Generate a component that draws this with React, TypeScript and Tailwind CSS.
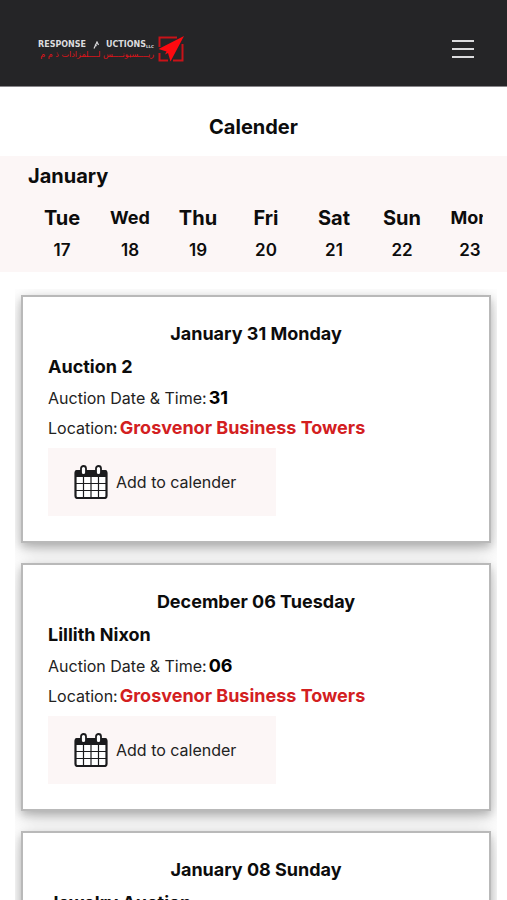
type Auction = { id: number; heading: string; title: string; day: string; location: string };

const days = [
  { name: "Tue", date: 17, wide: true },
  { name: "Wed", date: 18, wide: false },
  { name: "Thu", date: 19, wide: true },
  { name: "Fri", date: 20, wide: true },
  { name: "Sat", date: 21, wide: true },
  { name: "Sun", date: 22, wide: true },
  { name: "Mon", date: 23, wide: false },
];

const auctions: Auction[] = [
  { id: 1, heading: "January 31 Monday", title: "Auction 2", day: "31", location: "Grosvenor Business Towers" },
  { id: 2, heading: "December 06 Tuesday", title: "Lillith Nixon", day: "06", location: "Grosvenor Business Towers" },
  { id: 3, heading: "January 08 Sunday", title: "Jewelry Auction", day: "08", location: "Grosvenor Business Towers" },
];

function Logo() {
  return (
    <a href="#" className="flex items-center gap-1" aria-label="Response Auctions">
      <span className="flex w-[116px] flex-col pt-1 font-['DejaVu_Sans',sans-serif] whitespace-nowrap">
        <span className="flex h-2 items-center justify-between text-[8px] leading-2 font-bold text-[#dcdcde]">
          <span>RESPONSE</span>
          <svg viewBox="0 0 8 8" className="size-2" fill="none" stroke="#dcdcde" strokeWidth="1.2">
            <path d="M2 7.500 5 1 6.500 4M3 3.500 4.500 5" />
          </svg>
          <span className="flex items-end">
            UCTIONS<span className="text-[4px] leading-1">LLC</span>
          </span>
        </span>
        <span dir="rtl" lang="ar" className="h-3 text-[8px] leading-3 text-[#e0141a]">
          ريــــسبونــــس لــــلمزادات ذ م م
        </span>
      </span>
      <svg viewBox="0 0 26 26" className="size-[26px]" fill="none">
        <path d="M19 1.500H1.500V11M1.500 17v7.500H10M15 24.500h9.500V8" stroke="#c81319" strokeWidth="2" />
        <path d="M26 0 .5 13l8 2.500L7 18.500l3-1.500 2.500 8.500Z" fill="#fd0a10" />
      </svg>
    </a>
  );
}

function CalendarIcon() {
  return (
    <svg viewBox="0 0 34 34" className="size-[34px]" fill="none">
      <rect x="1.500" y="6" width="31" height="27" rx="2" fill="#fff" stroke="#1b1b1d" strokeWidth="2.200" />
      <path d="M1 11V7a2 2 0 0 1 2-2h28a2 2 0 0 1 2 2v5H1Z" fill="#1b1b1d" />
      <path d="M9.500 12v20M17 12v20M24.500 12v20M2 18.500h30M2 25.500h30" stroke="#1b1b1d" strokeWidth="1.200" />
      <rect x="7" y="1" width="5" height="9" rx="2.500" fill="#fff" stroke="#1b1b1d" strokeWidth="1.800" />
      <rect x="22" y="1" width="5" height="9" rx="2.500" fill="#fff" stroke="#1b1b1d" strokeWidth="1.800" />
    </svg>
  );
}

function AuctionCard({ auction }: { auction: Auction }) {
  return (
    <article className="border-2 border-[#b9b9b9] bg-white px-[25px] pt-[23px] pb-[25px] shadow-[0_4px_8px_rgba(0,0,0,0.2),0_6px_20px_rgba(0,0,0,0.19)]">
      <h3 className="text-center text-lg leading-7 font-bold">{auction.heading}</h3>
      <h4 className="mt-[3px] text-lg leading-8 font-bold">{auction.title}</h4>
      <p className="flex h-[30px] items-baseline gap-0.5 text-base leading-[30px] text-[#222]">
        Auction Date &amp; Time: <strong className="text-lg leading-[30px] font-bold text-black">{auction.day}</strong>
      </p>
      <p className="flex h-[30px] items-baseline gap-0.5 text-base leading-[30px] text-[#222]">
        Location: <strong className="text-lg leading-[30px] font-bold text-[#d3201f]">{auction.location}</strong>
      </p>
      <button type="button" className="mt-[5px] flex h-[68px] w-[228px] items-center gap-2 bg-[#fcf6f6] pl-[26px] text-base text-[#222]">
        <CalendarIcon />
        Add to calender
      </button>
    </article>
  );
}

export default function App() {
  return (
    <div className="min-h-screen bg-white font-['Inter',sans-serif] text-[#0c0c0c]">
      <header className="flex h-[87px] items-center justify-between border-b border-[#88868a] bg-[#252527] pt-3 pr-8 pl-[38px]">
        <Logo />
        <button type="button" aria-label="Open menu" className="flex w-6 flex-col gap-[6px] px-px">
          <span className="h-0.5 bg-[#dcdcde]" />
          <span className="h-0.5 bg-[#dcdcde]" />
          <span className="h-0.5 bg-[#dcdcde]" />
        </button>
      </header>
      <main>
        <h1 className="pt-[26px] pb-[14px] text-center text-xl leading-[29px] font-bold">Calender</h1>
        <section className="h-[116px] bg-[#fcf6f6] px-7 pt-1 pr-6">
          <h2 className="text-xl leading-8 font-bold">January</h2>
          <ol className="mt-2 flex overflow-hidden">
            {days.map((day) => (
              <li key={day.date} className="flex w-[68px] shrink-0 flex-col items-center font-bold">
                <span className={day.wide ? "text-xl leading-9" : "text-lg leading-9"}>{day.name}</span>
                <span className="text-[17px] leading-7 font-semibold">{day.date}</span>
              </li>
            ))}
          </ol>
        </section>
        <section className="mt-[17px] mr-[10px] ml-[15px] flex flex-col gap-5 overflow-hidden px-[6px] py-[6px]">
          {auctions.map((auction) => (
            <AuctionCard key={auction.id} auction={auction} />
          ))}
        </section>
      </main>
    </div>
  );
}
